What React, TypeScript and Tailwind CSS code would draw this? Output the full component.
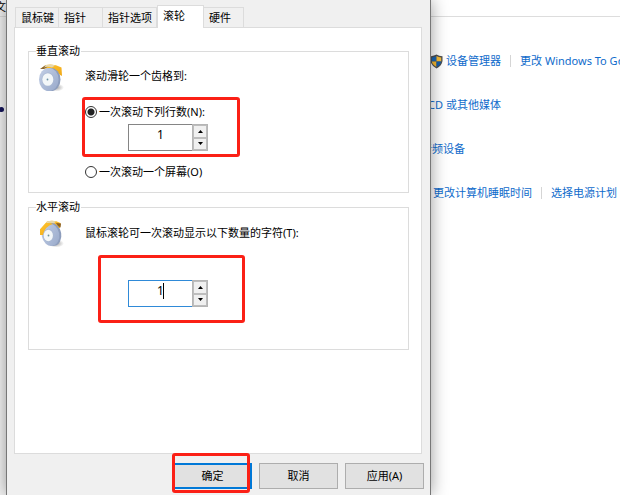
import { useState } from 'react';
import type { ReactNode } from 'react';
import clsx from 'clsx';

const tabs = [
  { name: '鼠标键', className: 'w-[44px]' },
  { name: '指针', className: 'w-[44px]' },
  { name: '指针选项', className: 'w-[54px]' },
  { name: '滚轮', className: 'w-[47px]' },
  { name: '硬件', className: 'w-[40px]' },
];

// Mouse wheel drawing shown beside each group
const WheelIcon = ({ tilted = false }: { tilted?: boolean }) => (
  <svg viewBox="0 0 28 28" className="w-7 h-7 shrink-0" aria-hidden="true">
    <defs>
      <linearGradient id="wheelRim" x1="0" y1="0" x2="1" y2="1">
        <stop offset="0" stopColor="#c3cfe6" />
        <stop offset="1" stopColor="#98a9ca" />
      </linearGradient>
      <linearGradient id="wheelCover" x1="0" y1="0" x2="1" y2="1">
        <stop offset="0" stopColor="#ffc52f" />
        <stop offset="1" stopColor="#f0a818" />
      </linearGradient>
      <radialGradient id="wheelShade">
        <stop offset="0" stopColor="#666" stopOpacity="0.6" />
        <stop offset="1" stopColor="#666" stopOpacity="0" />
      </radialGradient>
    </defs>
    <ellipse cx="20" cy="23.5" rx="8" ry="4" fill="url(#wheelShade)" />
    {tilted ? (
      <>
        <path d="M4 15V9.500L11 1.500Q18 -0.500 24.500 3L24 8H14L7 15Z" fill="url(#wheelCover)" />
        <path d="M11 1.500Q16 0 20 1.500L18 3.500Q14 2 10 3.500Z" fill="#e6d8ae" />
        <path d="M20 3L25 3.500L24.500 7.500L22 6Z" fill="#8a5f22" />
        <ellipse cx="16.500" cy="14.500" rx="8.800" ry="11.500" transform="rotate(-10 16.500 14.500)" fill="#8d9dbc" />
        <ellipse cx="14.500" cy="14.800" rx="8.800" ry="11.200" transform="rotate(-10 14.500 14.800)" fill="url(#wheelRim)" />
        <path d="M4 15V9.500L10 3Q15 2.500 17 4Q9 6 7 15Z" fill="url(#wheelCover)" />
        <ellipse cx="12.500" cy="15.500" rx="5.300" ry="6.500" fill="#a9b8d2" />
        <ellipse cx="12.300" cy="15.500" rx="4.600" ry="5.800" fill="#f3f7f9" />
        <circle cx="12.500" cy="15.500" r="0.900" fill="#6b9297" />
      </>
    ) : (
      <>
        <path d="M5 4.500L10 1Q18 -0.500 25.500 3.500L26 12L22.500 10L17 5Z" fill="url(#wheelCover)" />
        <path d="M4 5L9 1.500L12 2.500L8 5Z" fill="#8a6532" />
        <path d="M10 1Q16 0 19 1.500L16 3.500Q12 2 8 3.500Z" fill="#e6d8ae" />
        <ellipse cx="15" cy="15.500" rx="9.500" ry="11.500" fill="#8d9dbc" />
        <ellipse cx="12.800" cy="15.500" rx="9.800" ry="11.500" fill="url(#wheelRim)" />
        <ellipse cx="12" cy="15.500" rx="6.300" ry="7" fill="#a9b8d2" />
        <ellipse cx="11.800" cy="15.500" rx="5.500" ry="6.300" fill="#f3f7f9" />
        <circle cx="11.500" cy="15.500" r="0.900" fill="#6b92a7" />
      </>
    )}
  </svg>
);

const ShieldIcon = () => (
  <svg viewBox="0 0 13 15" className="w-[13px] h-[15px] shrink-0" aria-hidden="true">
    <path d="M6.500 0.500Q9 2 12.500 2.200V7Q12 11.500 6.500 14.500Q1 11.500 0.500 7V2.200Q4 2 6.500 0.500Z" fill="#4f5052" />
    <path d="M6.500 2Q4.500 3.200 1.800 3.400V7.500H6.500Z" fill="#1767b8" />
    <path d="M6.500 2Q8.500 3.200 11.200 3.400V7.500H6.500Z" fill="#f8bd38" />
    <path d="M1.800 7.500H6.500V13Q2.300 10.800 1.800 7.500Z" fill="#f8b92f" />
    <path d="M11.200 7.500H6.500V13Q10.700 10.800 11.200 7.500Z" fill="#125ead" />
  </svg>
);

interface SpinnerProps {
  label: string;
  value: number;
  onChange: (value: number) => void;
  active?: boolean;
}

const Spinner = ({ label, value, onChange, active = false }: SpinnerProps) => (
  <div className="relative flex w-20 h-[27px]">
    <input
      type="text"
      aria-label={label}
      value={value}
      onChange={(e) => onChange(Number(e.target.value) || 0)}
      className={clsx(
        'min-w-0 flex-1 border border-r-0 bg-white pb-[6px] text-center text-xs outline-none',
        active ? 'border-[#2f8ad8]' : 'border-[#858585]'
      )}
    />
    {active && <span className="absolute left-[35px] top-[3px] h-4 w-px bg-black" />}
    <div className="flex w-4 flex-col border border-[#b5b5b5] bg-[#e0e0e0]">
      <button
        type="button"
        aria-label="增加"
        onClick={() => onChange(value + 1)}
        className="flex flex-1 items-center justify-center border border-[#bdbdbd] bg-[#f0f0f0]"
      >
        <svg viewBox="0 0 5 3" className="h-[3px] w-[5px]">
          <path d="M0 3L2.500 0L5 3Z" />
        </svg>
      </button>
      <button
        type="button"
        aria-label="减少"
        onClick={() => onChange(Math.max(0, value - 1))}
        className="flex flex-1 items-center justify-center border border-[#bdbdbd] bg-[#f0f0f0]"
      >
        <svg viewBox="0 0 5 3" className="h-[3px] w-[5px]">
          <path d="M0 0L2.500 3L5 0Z" />
        </svg>
      </button>
    </div>
  </div>
);

interface ScrollModeProps {
  checked: boolean;
  onSelect: () => void;
  children: ReactNode;
}

const ScrollMode = ({ checked, onSelect, children }: ScrollModeProps) => (
  <label className="flex h-[14px] items-center gap-[2px]">
    <input
      type="radio"
      name="scroll-mode"
      checked={checked}
      onChange={onSelect}
      className="h-3 w-3 shrink-0 appearance-none rounded-full border border-[#333] bg-white checked:bg-[radial-gradient(circle,#222_3px,white_4px)]"
    />
    {children}
  </label>
);

const Divider = () => <span className="h-3 w-px shrink-0 bg-[#d5d5d5]" />;

const App = () => {
  const [tab, setTab] = useState('滚轮');
  const [mode, setMode] = useState('lines');
  const [lines, setLines] = useState(1);
  const [chars, setChars] = useState(1);

  return (
    <div className="grid min-h-screen grid-cols-[6px_minmax(0,9fr)_minmax(0,4fr)] overflow-hidden bg-white font-['Noto_Sans','Noto_Sans_CJK_SC',sans-serif] text-[11px] leading-[14px] text-black">
      {/* Window behind, left edge */}
      <div className="overflow-hidden bg-[#f4f4f4]">
        <div className="flex h-[17px] justify-end border-b border-[#ddd]">文</div>
        <div className="mt-[90px] -ml-px h-[5px] w-[5px] rounded-full bg-[#14145a]" />
      </div>

      {/* Mouse properties */}
      <main className="relative z-10 flex flex-col border-x border-[#777] bg-[#f0f0f0] shadow-[0_0_16px_rgba(0,0,0,0.4)]">
        <div role="tablist" className="flex h-[27px] items-end pl-2 pt-[5px]">
          {tabs.map(({ name, className }) => (
            <button
              key={name}
              type="button"
              role="tab"
              aria-selected={tab === name}
              onClick={() => setTab(name)}
              className={clsx(
                'shrink-0 whitespace-nowrap border border-b-0 border-[#dcdcdc] pl-[5px] text-left',
                className,
                tab === name ? 'relative z-10 -mb-px h-[23px] bg-white pb-[2px]' : 'h-5 border-l-0 first:border-l'
              )}
            >
              {name}
            </button>
          ))}
        </div>

        <div className="ml-[7px] mr-2 flex flex-1 flex-col gap-[7px] border border-[#dcdcdc] bg-white pb-4 pl-[13px] pr-3 pt-4">
          <fieldset className="min-w-0 border border-[#dcdcdc] pb-[13px] pl-[7px]">
            <legend className="pr-px">垂直滚动</legend>
            <div className="flex gap-[18px]">
              <div className="pt-[6px]">
                <WheelIcon />
              </div>
              <div className="min-w-0 flex-1 pt-[11px]">
                <p className="pl-[3px]">滚动滑轮一个齿格到:</p>
                <div className="mt-[14px] w-[158px] rounded-[3px] border-3 border-[#fb2016] pb-[3px] pt-[5px]">
                  <ScrollMode checked={mode === 'lines'} onSelect={() => setMode('lines')}>
                    一次滚动下列行数(N):
                  </ScrollMode>
                  <div className="ml-[43px] mt-[5px]">
                    <Spinner label="行数" value={lines} onChange={setLines} />
                  </div>
                </div>
                <div className="mt-2 pl-[3px]">
                  <ScrollMode checked={mode === 'screen'} onSelect={() => setMode('screen')}>
                    一次滚动一个屏幕(O)
                  </ScrollMode>
                </div>
              </div>
            </div>
          </fieldset>

          <fieldset className="min-w-0 border border-[#dcdcdc] pb-[26px] pl-[7px]">
            <legend className="pr-px">水平滚动</legend>
            <div className="flex gap-[18px]">
              <div className="pt-[6px]">
                <WheelIcon tilted />
              </div>
              <div className="min-w-0 flex-1 pt-3">
                <p className="pl-[3px]">鼠标滚轮可一次滚动显示以下数量的字符(T):</p>
                <div className="ml-4 mt-[15px] w-[147px] rounded-[3px] border-3 border-[#fb2016] pb-[13px] pl-[27px] pt-[22px]">
                  <Spinner label="字符数" value={chars} onChange={setChars} active />
                </div>
              </div>
            </div>
          </fieldset>
        </div>

        <div className="flex justify-end gap-[7px] pb-[6px] pr-[6px] pt-[9px]">
          <div className="relative">
            <button type="button" className="h-[26px] w-[79px] border-2 border-[#0078d7] bg-[#e1e1e1]">
              确定
            </button>
            <span className="pointer-events-none absolute -bottom-1 -left-px -top-[10px] right-[2px] rounded-[3px] border-3 border-[#fb2016]" />
          </div>
          <button type="button" className="h-[26px] w-[79px] border border-[#adadad] bg-[#e1e1e1]">
            取消
          </button>
          <button type="button" className="h-[26px] w-[79px] border border-[#adadad] bg-[#e1e1e1]">
            应用(A)
          </button>
        </div>
      </main>

      {/* Window behind, device links */}
      <div className="overflow-hidden whitespace-nowrap text-[#0f6bcb]">
        <div className="h-[17px] border-b border-[#ddd]" />
        <nav className="flex flex-col gap-[30px] pt-[37px]">
          <div className="-ml-px flex h-[14px] items-center">
            <ShieldIcon />
            <a href="#devices" className="ml-[3px] mr-[9px]">设备管理器</a>
            <Divider />
            <a href="#windows-to-go" className="ml-[9px]">更改 Windows To Go</a>
          </div>
          <a href="#media" className="-ml-[3px]">CD 或其他媒体</a>
          <a href="#audio" className="-ml-[10px]">音频设备</a>
          <div className="flex items-center pl-[2px]">
            <a href="#sleep" className="mr-[9px]">更改计算机睡眠时间</a>
            <Divider />
            <a href="#power" className="ml-[9px]">选择电源计划</a>
          </div>
        </nav>
      </div>
    </div>
  );
};

export default App;
